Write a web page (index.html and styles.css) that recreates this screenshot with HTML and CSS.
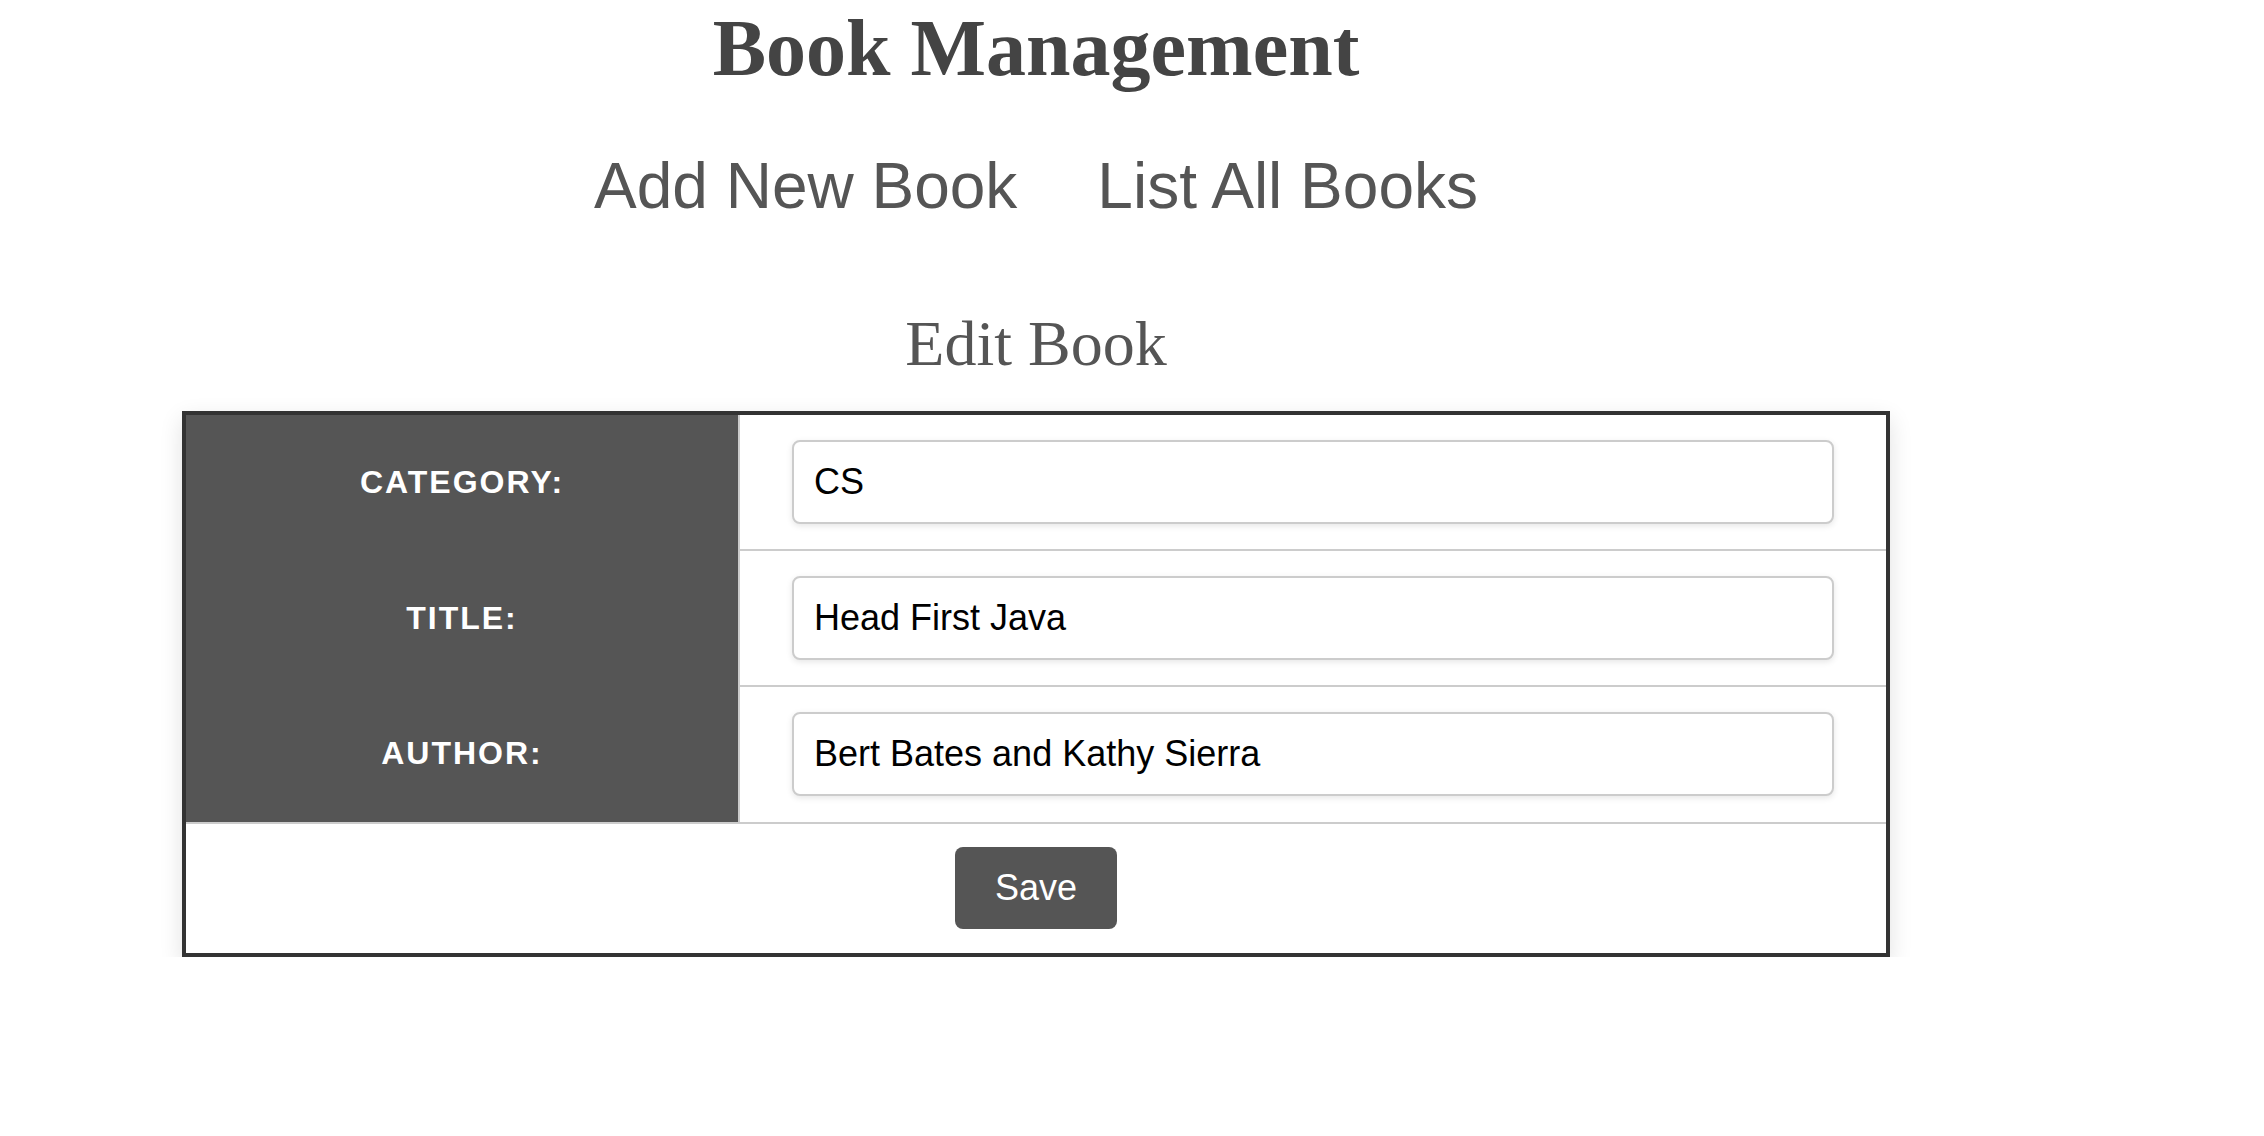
FILE: index.html
```html
<!DOCTYPE html>
<html lang="en">
<head>
<meta charset="utf-8">
<title>Book Management</title>
<link rel="stylesheet" href="styles.css">
</head>
<body>
<div class="page">
  <h1 class="title">Book Management</h1>
  <nav class="nav">
    <a class="nav-link" href="#">Add New Book</a>
    <a class="nav-link" href="#">List All Books</a>
  </nav>
  <h2 class="subtitle">Edit Book</h2>
  <form class="card">
    <div class="row">
      <label class="label-cell" for="category">Category:</label>
      <div class="field-cell"><input class="field" id="category" type="text" value="CS"></div>
    </div>
    <div class="row">
      <label class="label-cell" for="title">Title:</label>
      <div class="field-cell"><input class="field" id="title" type="text" value="Head First Java"></div>
    </div>
    <div class="row row-last">
      <label class="label-cell" for="author">Author:</label>
      <div class="field-cell field-cell-last"><input class="field" id="author" type="text" value="Bert Bates and Kathy Sierra"></div>
    </div>
    <div class="actions">
      <button class="save-btn" type="button">Save</button>
    </div>
  </form>
</div>
</body>
</html>
```
FILE: styles.css
```css
html, body {
  margin: 0;
  padding: 0;
  background: #fff;
}

body {
  font-family: "Liberation Sans", Arial, sans-serif;
}

.page {
  width: 1708px;
  margin-left: 182px;
  padding-top: 8px;
}

.title {
  margin: 0;
  font-family: "Liberation Serif", "Times New Roman", serif;
  font-weight: bold;
  font-size: 80px;
  line-height: 80px;
  color: #444;
  text-align: center;
}

.nav {
  display: flex;
  justify-content: center;
  gap: 80px;
  margin-top: 66px;
}

.nav-link {
  font-family: "Liberation Sans", Arial, sans-serif;
  font-size: 64px;
  line-height: 64px;
  color: #555;
  text-decoration: none;
}

.subtitle {
  margin: 94px 0 0;
  font-family: "Liberation Serif", "Times New Roman", serif;
  font-weight: normal;
  font-size: 64px;
  line-height: 64px;
  color: #555;
  text-align: center;
}

.card {
  margin-top: 35px;
  border: 4px solid #333;
  background: #fff;
  box-shadow: 0 8px 22px rgba(0, 0, 0, 0.12);
}

.row {
  display: grid;
  grid-template-columns: 554px 1fr;
}

.row-last {
  border-bottom: 2px solid #ccc;
}

.label-cell {
  box-sizing: border-box;
  display: flex;
  align-items: center;
  justify-content: center;
  padding-bottom: 2px;
  background: #555;
  border-right: 2px solid #ccc;
  color: #fff;
  font-weight: bold;
  font-size: 32px;
  letter-spacing: 2px;
  text-transform: uppercase;
}

.field-cell {
  padding: 25px 52px;
  border-bottom: 2px solid #ccc;
}

.field-cell-last {
  border-bottom: none;
  padding-bottom: 26px;
}

.field {
  box-sizing: border-box;
  display: block;
  width: 100%;
  height: 84px;
  margin: 0;
  padding: 0 20px;
  border: 2px solid #ccc;
  border-radius: 8px;
  box-shadow: 0 2px 6px rgba(0, 0, 0, 0.1);
  font-family: "Liberation Sans", Arial, sans-serif;
  font-size: 36px;
  color: #000;
  background: #fff;
  outline: none;
}

.actions {
  display: flex;
  justify-content: center;
  padding: 23px 0 24px;
}

.save-btn {
  width: 162px;
  height: 82px;
  border: none;
  border-radius: 8px;
  background: #555;
  color: #fff;
  font-family: "Liberation Sans", Arial, sans-serif;
  font-size: 36px;
  cursor: pointer;
}
```
